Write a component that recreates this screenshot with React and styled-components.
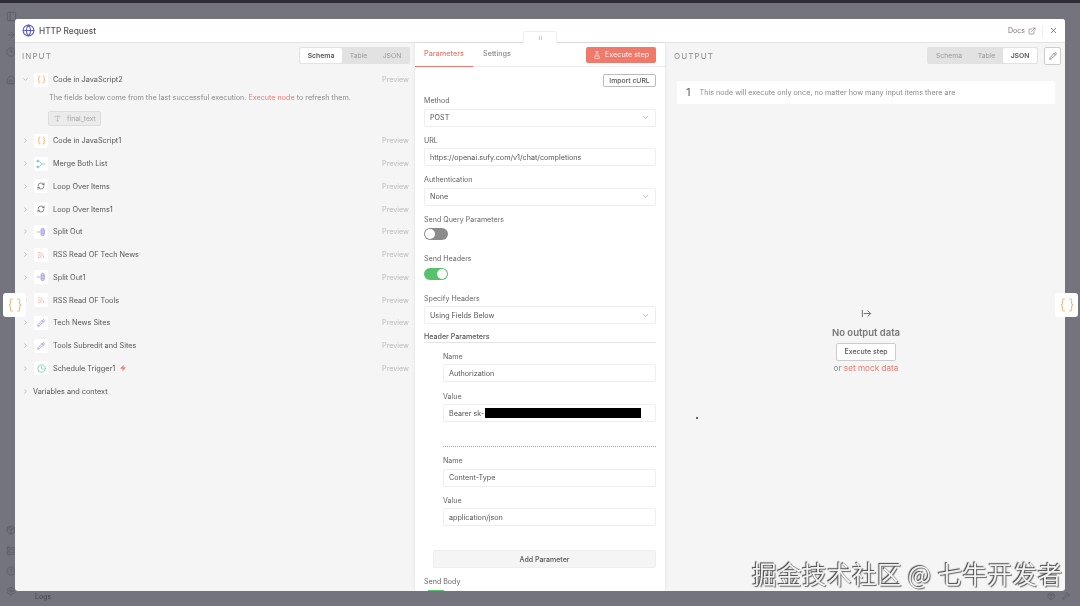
import React from 'react'
import styled, { createGlobalStyle } from 'styled-components'
import {
  Braces,
  ChevronDown,
  ChevronRight,
  Clock,
  ExternalLink,
  FlaskConical,
  Globe,
  Pencil,
  RefreshCw,
  Rss,
  Type,
  X,
  Zap,
  ArrowRightFromLine,
  PanelLeft,
  ArrowRight,
  Clock3,
  House,
  Settings,
  Package,
  CircleHelp,
  LayoutList,
  Wrench,
} from 'lucide-react'

const GlobalStyle = createGlobalStyle`
  html, body { margin: 0; padding: 0; height: 100%; }
  body { font-family: Inter, "Noto Sans", sans-serif; background: #74747e; overflow: hidden; }
  * { box-sizing: border-box; }
`

const Backdrop = styled.div`
  position: relative;
  width: 1080px;
  height: 606px;
  overflow: hidden;
  background: #74747e;
  border-top: 3px solid #2d2d33;
  padding: 16px 15px 15px;
  filter: blur(0.4px);
`

const SideIcon = styled.span`
  position: absolute;
  left: 6px;
  top: ${p => p.$top}px;
  color: #5c5c64;
  display: flex;
`

const BackText = styled.span`
  position: absolute;
  left: 35px;
  top: 589px;
  font-size: 7px;
  color: #45454c;
`

const BackIcon = styled.span`
  position: absolute;
  top: 589px;
  left: ${p => p.$left}px;
  color: #5c5c64;
  display: flex;
`

const Modal = styled.div`
  position: relative;
  height: 572px;
  display: flex;
  flex-direction: column;
  background: #f5f5f5;
  border-radius: 3px;
  overflow: hidden;
`

const ModalHeader = styled.header`
  height: 24px;
  flex: none;
  display: flex;
  align-items: center;
  padding: 0 6px 0 7px;
  background: #fff;
  border-bottom: 1px solid #e3e3e3;
`

const Title = styled.h1`
  margin: 0 0 0 4px;
  font-size: 8.3px;
  font-weight: 500;
  color: #555;
  flex: 1;
`

const DocsLink = styled.a`
  display: flex;
  align-items: center;
  gap: 3px;
  font-size: 7px;
  color: #777;
  padding-right: 6px;
  border-right: 1px solid #eee;
  height: 12px;
`

const CloseButton = styled.button`
  border: 0;
  background: none;
  padding: 0;
  margin-left: 6px;
  margin-right: 1px;
  color: #555;
  display: flex;
`

const Panels = styled.div`
  flex: 1;
  min-height: 0;
  display: flex;
`

const SidePanel = styled.section`
  width: 400px;
  flex: none;
  display: flex;
  flex-direction: column;
`

const PanelHead = styled.div`
  height: 25.6px;
  flex: none;
  display: flex;
  align-items: center;
  justify-content: space-between;
  padding: ${p => (p.$right ? '0 4px 0 9px' : '0 5px 0 7px')};
`

const PanelLabel = styled.span`
  font-size: 8px;
  letter-spacing: 1.1px;
  color: #8a8a8a;
`

const ViewTabs = styled.div`
  display: flex;
  align-items: center;
  width: 111px;
  height: 17px;
  padding: 1px;
  background: #e2e2e2;
  border-radius: 2px;
`

const ViewTab = styled.span`
  flex: ${p => p.$grow};
  height: 15px;
  line-height: 15px;
  text-align: center;
  font-size: 6.8px;
  font-weight: ${p => (p.$active ? 600 : 400)};
  color: ${p => (p.$active ? '#555' : '#999')};
  background: ${p => (p.$active ? '#fff' : 'transparent')};
  border-radius: 2px;
`

const HeadRight = styled.div`
  display: flex;
  align-items: center;
  gap: 6px;
`

const PencilButton = styled.button`
  width: 17px;
  height: 18px;
  padding: 0;
  display: flex;
  align-items: center;
  justify-content: center;
  color: #666;
  background: #fff;
  border: 1px solid #ccc;
  border-radius: 2px;
`

const NodeList = styled.div`
  display: flex;
  flex-direction: column;
`

const NodeRow = styled.div`
  height: 22.75px;
  flex: none;
  display: flex;
  align-items: center;
  padding: 0 6px 0 7px;
  font-size: 7.3px;
  color: #555;
`

const Chevron = styled.span`
  width: 12px;
  flex: none;
  display: flex;
  color: #999;
`

const IconBox = styled.span`
  width: 14px;
  height: 14px;
  flex: none;
  display: flex;
  align-items: center;
  justify-content: center;
  background: #fff;
  border-radius: 2px;
  color: ${p => p.$color};
`

const NodeName = styled.span`
  margin-left: 5px;
  display: flex;
  align-items: center;
  gap: 5px;
`

const Preview = styled.span`
  margin-left: auto;
  font-size: 7.2px;
  color: #bbb;
`

const Expanded = styled.div`
  height: 38.2px;
  padding-left: 33px;
`

const HintText = styled.p`
  margin: 0 0 0 1px;
  height: 15px;
  line-height: 14px;
  font-size: 7.2px;
  color: #8a8a8a;
`

const Accent = styled.span`
  color: #ea7b6f;
`

const Chip = styled.span`
  margin-top: 5px;
  width: 53px;
  height: 15px;
  display: flex;
  align-items: center;
  gap: 6px;
  padding-left: 5px;
  font-size: 6.8px;
  color: #a5a5a5;
  background: #ebebeb;
  border: 1px solid #ddd;
  border-radius: 2px;
`

const ContextLabel = styled.span`
  margin-left: -1px;
`

const CenterPanel = styled.section`
  position: relative;
  width: 250px;
  flex: none;
  display: flex;
  flex-direction: column;
  background: #fff;
  box-shadow: 0 0 4px rgba(0, 0, 0, 0.08);
  z-index: 1;
`

const DragHandle = styled.div`
  position: absolute;
  left: 108px;
  top: -12px;
  width: 34px;
  height: 12px;
  display: flex;
  align-items: center;
  justify-content: center;
  gap: 1px;
  background: #fff;
  border: 1px solid #eee;
  border-bottom: 0;
  border-radius: 2px 2px 0 0;
`

const Grip = styled.i`
  width: 1px;
  height: 4px;
  background: #ccc;
`

const TabBar = styled.div`
  height: 24px;
  flex: none;
  display: flex;
  align-items: center;
  padding-right: 9px;
  border-bottom: 1px solid #eaeaea;
`

const ParamTab = styled.span`
  height: 24px;
  line-height: 22px;
  padding: 0 9px;
  margin-right: ${p => p.$gap || 0}px;
  font-size: 7.3px;
  font-weight: ${p => (p.$active ? 500 : 400)};
  color: ${p => (p.$active ? '#ea7b6f' : '#777')};
  border-bottom: ${p => (p.$active ? '1px solid #ea7b6f' : '0')};
`

const ExecuteButton = styled.button`
  margin-left: auto;
  width: 70px;
  height: 16px;
  padding: 0;
  display: flex;
  align-items: center;
  justify-content: center;
  gap: 4px;
  border: 0;
  border-radius: 2px;
  background: #ef7a6b;
  color: #fbe3df;
  font: 500 7.2px Inter, sans-serif;
`

const FormBody = styled.div`
  flex: 1;
  min-height: 0;
  overflow: hidden;
  padding: 7px 9px 0;
`

const ImportRow = styled.div`
  display: flex;
  justify-content: flex-end;
  height: 21px;
`

const SmallButton = styled.button`
  height: 13px;
  width: 53px;
  padding: 0;
  background: #fff;
  border: 1px solid #bbb;
  border-radius: 2px;
  color: #555;
  font: 500 6.8px Inter, sans-serif;
`

const Field = styled.div`
  display: flex;
  flex-direction: column;
  height: ${p => p.$height || 39.6}px;
  margin-left: ${p => p.$indent || 0}px;
`

const Label = styled.label`
  display: block;
  flex: none;
  height: 13.5px;
  line-height: 11px;
  font-size: 7.1px;
  color: #666;
`

const Control = styled.div`
  position: relative;
  height: 18px;
  display: flex;
  align-items: center;
  justify-content: space-between;
  padding: 0 5px;
  background: #fff;
  border: 1px solid #eeeeee;
  border-radius: 2px;
  font-size: 7.2px;
  color: #555;
`

const Redaction = styled.span`
  position: absolute;
  left: 41px;
  top: 3px;
  width: 156px;
  height: 10px;
  background: #000;
`

const Toggle = styled.span`
  width: 24px;
  height: 12px;
  margin-top: 1px;
  display: flex;
  justify-content: ${p => (p.$on ? 'flex-end' : 'flex-start')};
  align-items: center;
  padding: 1px;
  border-radius: 6px;
  background: ${p => (p.$on ? '#58c16b' : '#8c8c8c')};

  &::after {
    content: '';
    width: 10px;
    height: 10px;
    border-radius: 50%;
    background: #fff;
  }
`

const SectionTitle = styled.div`
  height: 13px;
  line-height: 14px;
  font-size: 7.1px;
  font-weight: 500;
  color: #555;
  border-bottom: 1px solid #e4e4e4;
  margin-bottom: 8px;
`

const DashedRule = styled.hr`
  margin: 24px 0 8px 19px;
  border: 0;
  border-top: 1px dotted #a8a8a8;
`

const AddParameter = styled.button`
  display: block;
  width: 223px;
  height: 18px;
  margin: 24px 0 8px 9px;
  padding: 0;
  background: #f5f5f5;
  border: 1px solid #efefef;
  border-radius: 2px;
  color: #555;
  font: 500 7px Inter, sans-serif;
`

const BodyToggle = styled.span`
  display: block;
  width: 16px;
  height: 4px;
  margin: 0 0 0 4px;
  background: #58c16b;
`

const Output = styled.div`
  flex: 1;
  min-height: 0;
  display: flex;
  flex-direction: column;
  padding: 12.4px 10px 0 12px;
`

const Notice = styled.div`
  height: 23px;
  flex: none;
  display: flex;
  align-items: center;
  gap: 9px;
  padding-left: 9px;
  background: #fff;
  border-radius: 2px;
  font-size: 7.2px;
  color: #8a8a8a;
`

const NoticeIndex = styled.b`
  font-size: 11px;
  font-weight: 500;
  color: #777;
`

const Empty = styled.div`
  margin-top: 204px;
  display: flex;
  flex-direction: column;
  align-items: center;
  color: #666;
`

const EmptyTitle = styled.strong`
  margin-top: 8px;
  font-size: 9.5px;
  font-weight: 600;
  color: #777;
`

const EmptyButton = styled.button`
  width: 60px;
  height: 18px;
  margin-top: 5px;
  padding: 0;
  background: #fff;
  border: 1px solid #ccc;
  border-radius: 2px;
  color: #555;
  font: 500 7px Inter, sans-serif;
`

const EmptyHint = styled.span`
  margin-top: 2px;
  font-size: 8.2px;
  line-height: 11px;
  color: #888;
`

const Dot = styled.i`
  position: absolute;
  left: 696px;
  top: 414px;
  width: 2px;
  height: 2px;
  background: #333;
  border-radius: 50%;
`

const FloatingNode = styled.div`
  position: absolute;
  top: 290px;
  left: ${p => p.$left}px;
  width: 23px;
  height: 24px;
  display: flex;
  align-items: center;
  justify-content: center;
  background: #fff;
  border-radius: 3px;
  color: #f0a04b;
`

const Watermark = styled.div`
  position: absolute;
  left: 752px;
  top: 552px;
  font: 400 24.6px "Noto Sans CJK SC", sans-serif;
  letter-spacing: 0.4px;
  white-space: nowrap;
  color: #f2f2f2;
  text-shadow: -1px -1px 1px #444, 1px 1px 1px #666;
`

// little node glyphs that have no package icon
const MergeIcon = () => (
  <svg width="10" height="10" viewBox="0 0 12 12" fill="none" stroke="#7cc3df" strokeWidth="1">
    <path d="M1 2.5h2.5L7 6 3.5 9.5H1" />
    <path d="M7 6h4" />
    <circle cx="2" cy="2.5" r="1" fill="#7cc3df" />
    <circle cx="2" cy="9.5" r="1" fill="#7cc3df" />
  </svg>
)

const SplitIcon = () => (
  <svg width="10" height="10" viewBox="0 0 12 12" fill="none" stroke="#a79ee4" strokeWidth="1">
    <path d="M1 6h4" />
    <rect x="6" y="1.5" width="4" height="9" rx="2" fill="#d5d0f4" />
    <path d="M6 4.5h4M6 7.5h4" />
  </svg>
)

const nodes = [
  { name: 'Code in JavaScript1', icon: <Braces size={9} />, color: '#f0a04b' },
  { name: 'Merge Both List', icon: <MergeIcon />, color: '#5db4d6' },
  { name: 'Loop Over Items', icon: <RefreshCw size={8} />, color: '#555' },
  { name: 'Loop Over Items1', icon: <RefreshCw size={8} />, color: '#555' },
  { name: 'Split Out', icon: <SplitIcon />, color: '#9a8fe0' },
  { name: 'RSS Read OF Tech News', icon: <Rss size={8} />, color: '#ef9a8f' },
  { name: 'Split Out1', icon: <SplitIcon />, color: '#9a8fe0' },
  { name: 'RSS Read OF Tools', icon: <Rss size={8} />, color: '#f2a78f' },
  { name: 'Tech News Sites', icon: <Pencil size={8} />, color: '#8878dc' },
  { name: 'Tools Subredit and Sites', icon: <Pencil size={8} />, color: '#8878dc' },
  { name: 'Schedule Trigger1', icon: <Clock size={9} />, color: '#6cc7ae', trigger: true },
]

const Row = ({ name, icon, color, trigger, open }) => (
  <NodeRow>
    <Chevron>{open ? <ChevronDown size={7} /> : <ChevronRight size={7} />}</Chevron>
    <IconBox $color={color}>{icon}</IconBox>
    <NodeName>
      {name}
      {trigger && <Zap size={6} color="#ef7a6b" fill="#ef7a6b" />}
    </NodeName>
    <Preview>Preview</Preview>
  </NodeRow>
)

const Select = ({ value }) => (
  <Control>
    {value}
    <ChevronDown size={9} color="#aaa" />
  </Control>
)

const Tabs = ({ active }) => (
  <ViewTabs>
    <ViewTab $grow={42} $active={active === 'Schema'}>Schema</ViewTab>
    <ViewTab $grow={33} $active={active === 'Table'}>Table</ViewTab>
    <ViewTab $grow={34} $active={active === 'JSON'}>JSON</ViewTab>
  </ViewTabs>
)

export default function App() {
  return (
    <Backdrop>
      <GlobalStyle />
      <SideIcon $top={8}><PanelLeft size={11} /></SideIcon>
      <SideIcon $top={27}><ArrowRight size={10} /></SideIcon>
      <SideIcon $top={44}><Clock3 size={10} /></SideIcon>
      <SideIcon $top={72}><House size={10} /></SideIcon>
      <SideIcon $top={522}><Package size={10} /></SideIcon>
      <SideIcon $top={543}><LayoutList size={10} /></SideIcon>
      <SideIcon $top={563}><CircleHelp size={10} /></SideIcon>
      <SideIcon $top={583}><Settings size={10} /></SideIcon>
      <BackText>Logs</BackText>
      <BackIcon $left={1047}><Package size={8} /></BackIcon>
      <BackIcon $left={1062}><Wrench size={8} /></BackIcon>

      <Modal>
        <ModalHeader>
          <Globe size={13} color="#5a5ad6" />
          <Title>HTTP Request</Title>
          <DocsLink>
            Docs <ExternalLink size={8} />
          </DocsLink>
          <CloseButton><X size={9} /></CloseButton>
        </ModalHeader>

        <Panels>
          <SidePanel>
            <PanelHead>
              <PanelLabel>INPUT</PanelLabel>
              <Tabs active="Schema" />
            </PanelHead>
            <NodeList>
              <Row name="Code in JavaScript2" icon={<Braces size={9} />} color="#f0a04b" open />
              <Expanded>
                <HintText>
                  The fields below come from the last successful execution. <Accent>Execute node</Accent> to refresh them.
                </HintText>
                <Chip><Type size={7} />final_text</Chip>
              </Expanded>
              {nodes.map(n => <Row key={n.name} {...n} />)}
              <NodeRow>
                <Chevron><ChevronRight size={7} /></Chevron>
                <ContextLabel>Variables and context</ContextLabel>
              </NodeRow>
            </NodeList>
          </SidePanel>

          <CenterPanel>
            <DragHandle><Grip /><Grip /></DragHandle>
            <TabBar>
              <ParamTab $active $gap={1}>Parameters</ParamTab>
              <ParamTab>Settings</ParamTab>
              <ExecuteButton><FlaskConical size={8} />Execute step</ExecuteButton>
            </TabBar>
            <FormBody>
              <ImportRow><SmallButton>Import cURL</SmallButton></ImportRow>
              <Field><Label>Method</Label><Select value="POST" /></Field>
              <Field><Label>URL</Label><Control>https://openai.sufy.com/v1/chat/completions</Control></Field>
              <Field><Label>Authentication</Label><Select value="None" /></Field>
              <Field><Label>Send Query Parameters</Label><Toggle /></Field>
              <Field><Label>Send Headers</Label><Toggle $on /></Field>
              <Field $height={37}><Label>Specify Headers</Label><Select value="Using Fields Below" /></Field>
              <SectionTitle>Header Parameters</SectionTitle>
              <Field $indent={19}><Label>Name</Label><Control>Authorization</Control></Field>
              <Field $indent={19} $height={31.5}>
                <Label>Value</Label>
                <Control>Bearer sk-<Redaction /></Control>
              </Field>
              <DashedRule />
              <Field $indent={19}><Label>Name</Label><Control>Content-Type</Control></Field>
              <Field $indent={19} $height={31.5}><Label>Value</Label><Control>application/json</Control></Field>
              <AddParameter>Add Parameter</AddParameter>
              <Label>Send Body</Label>
              <BodyToggle />
            </FormBody>
          </CenterPanel>

          <SidePanel>
            <PanelHead $right>
              <PanelLabel>OUTPUT</PanelLabel>
              <HeadRight>
                <Tabs active="JSON" />
                <PencilButton><Pencil size={8} /></PencilButton>
              </HeadRight>
            </PanelHead>
            <Output>
              <Notice>
                <NoticeIndex>1</NoticeIndex>
                This node will execute only once, no matter how many input items there are
              </Notice>
              <Empty>
                <ArrowRightFromLine size={11} />
                <EmptyTitle>No output data</EmptyTitle>
                <EmptyButton>Execute step</EmptyButton>
                <EmptyHint>or <Accent>set mock data</Accent></EmptyHint>
              </Empty>
            </Output>
          </SidePanel>
        </Panels>
      </Modal>

      <Dot />
      <FloatingNode $left={3}><Braces size={16} strokeWidth={1.3} /></FloatingNode>
      <FloatingNode $left={1055}><Braces size={16} strokeWidth={1.3} /></FloatingNode>
      <Watermark>掘金技术社区 @ 七牛开发者</Watermark>
    </Backdrop>
  )
}
